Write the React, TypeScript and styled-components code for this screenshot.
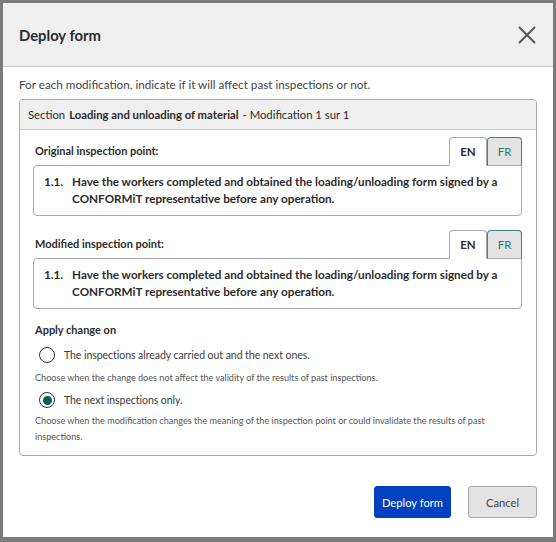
import React, { useState } from "react";
import styled, { createGlobalStyle } from "styled-components";

const GlobalStyle = createGlobalStyle`
    html, body {
        margin: 0;
        padding: 0;
        background: #7b7b7b;
        font-family: Lato, "Noto Sans", sans-serif;
    }
`;

const Overlay = styled.div`
    width: 556px;
    height: 542px;
    box-sizing: border-box;
    padding: 3px 3px 5px 3px;
    background: #7b7b7b;
`;

const Dialog = styled.div`
    width: 550px;
    height: 534px;
    background: #fff;
    display: flex;
    flex-direction: column;
    box-sizing: border-box;
`;

const Header = styled.div`
    height: 64px;
    background: #efefef;
    border-bottom: 1px solid #c8c8c8;
    display: flex;
    align-items: center;
    justify-content: space-between;
    padding: 0 14px 0 16px;
    box-sizing: border-box;
`;

const Title = styled.h1`
    margin: 0;
    font-size: 14.8px;
    font-weight: 700;
    color: #2b2b2b;
`;

const CloseButton = styled.button`
    background: none;
    border: none;
    padding: 0;
    width: 24px;
    height: 24px;
    cursor: pointer;
    display: flex;
    align-items: center;
    justify-content: center;
`;

const Body = styled.div`
    flex: 1;
    padding: 8px 16px 0 16px;
    display: flex;
    flex-direction: column;
`;

const Intro = styled.p`
    margin: 0 0 6px 0;
    font-size: 11.7px;
    color: #444;
    line-height: 18px;
`;

const Section = styled.div`
    border: 1px solid #a9a9a9;
    border-radius: 4px;
    overflow: hidden;
`;

const SectionHeader = styled.div`
    background: #efefef;
    border-bottom: 1px solid #c8c8c8;
    height: 29px;
    display: flex;
    align-items: center;
    padding: 0 8px;
    font-size: 11.3px;
    color: #2b2b2b;

    b {
        font-weight: 700;
        margin: 0 4px;
    }
`;

const SectionBody = styled.div`
    padding: 7px 14px 10px 13px;
    display: flex;
    flex-direction: column;
`;

const PointBlock = styled.div<{ $gap?: number }>`
    display: flex;
    flex-direction: column;
    margin-bottom: ${(p) => p.$gap ?? 0}px;
`;

const PointTop = styled.div`
    display: flex;
    align-items: flex-end;
    justify-content: space-between;
    padding-left: 2px;
`;

const PointLabel = styled.div`
    font-size: 11px;
    font-weight: 700;
    color: #2b2b2b;
    line-height: 16px;
    padding-bottom: 6px;
`;

const Tabs = styled.div`
    display: flex;
    margin-bottom: -1px;
    position: relative;
    z-index: 1;
`;

const Tab = styled.div<{ $active?: boolean }>`
    width: ${(p) => (p.$active ? 38 : 35)}px;
    height: 29px;
    box-sizing: border-box;
    display: flex;
    align-items: center;
    justify-content: center;
    font-size: 11.5px;
    font-weight: ${(p) => (p.$active ? 700 : 400)};
    color: ${(p) => (p.$active ? "#2b2b2b" : "#1f7a7a")};
    background: ${(p) => (p.$active ? "#fff" : "#e3e3e3")};
    border: 1px solid ${(p) => (p.$active ? "#a9a9a9" : "#3b8484")};
    border-bottom: ${(p) => (p.$active ? "1px solid #fff" : "1px solid #a9a9a9")};
    border-radius: 4px 4px 0 0;
`;

const PointBox = styled.div`
    border: 1px solid #a9a9a9;
    border-radius: 4px 0 4px 4px;
    padding: 7px 12px 8px 10px;
    display: flex;
    gap: 9px;
    font-size: 11.7px;
    font-weight: 700;
    line-height: 17px;
    color: #2b2b2b;
`;

const PointNumber = styled.span`
    flex: none;
`;

const ApplyTitle = styled.div`
    font-size: 11px;
    font-weight: 700;
    color: #2b2b2b;
    line-height: 16px;
    margin: 13px 0 6px 2px;
`;

const RadioRow = styled.label`
    display: flex;
    align-items: center;
    gap: 9px;
    padding-left: 6px;
    height: 22px;
    font-size: 10.5px;
    letter-spacing: -0.05px;
    color: #3a3a3a;
    cursor: pointer;
`;

const RadioCircle = styled.span<{ $checked?: boolean }>`
    width: 16px;
    height: 16px;
    border-radius: 50%;
    border: 1.5px solid #333;
    box-sizing: border-box;
    display: flex;
    align-items: center;
    justify-content: center;
    background: #fff;

    &::after {
        content: "";
        width: 9px;
        height: 9px;
        border-radius: 50%;
        background: ${(p) => (p.$checked ? "#006356" : "transparent")};
    }
`;

const Hint = styled.div`
    font-size: 9.1px;
    color: #555;
    line-height: 16px;
    margin: 4px 0 3px 2px;

    &:last-child {
        margin: 2px 0 0 2px;
    }
`;

const Footer = styled.div`
    margin-top: auto;
    display: flex;
    justify-content: flex-end;
    gap: 17px;
    padding: 0 16px 19px 0;
`;

const Button = styled.button<{ $primary?: boolean }>`
    height: 32px;
    width: ${(p) => (p.$primary ? 77 : 69)}px;
    padding: 0;
    font-family: inherit;
    font-size: 11.2px;
    border-radius: 3px;
    cursor: pointer;
    color: ${(p) => (p.$primary ? "#fff" : "#444")};
    background: ${(p) => (p.$primary ? "#0041c2" : "#e3e3e3")};
    border: 1px solid ${(p) => (p.$primary ? "#0041c2" : "#a9a9a9")};
`;

const pointText =
    "Have the workers completed and obtained the loading/unloading form signed by a CONFORMiT representative before any operation.";

function InspectionPoint({ label, gap }: { label: string; gap?: number }) {
    return (
        <PointBlock $gap={gap}>
            <PointTop>
                <PointLabel>{label}</PointLabel>
                <Tabs>
                    <Tab $active>EN</Tab>
                    <Tab>FR</Tab>
                </Tabs>
            </PointTop>
            <PointBox>
                <PointNumber>1.1.</PointNumber>
                <span>{pointText}</span>
            </PointBox>
        </PointBlock>
    );
}

export default function App() {
    const [choice, setChoice] = useState("next");

    return (
        <Overlay>
            <GlobalStyle />
            <Dialog>
                <Header>
                    <Title>Deploy form</Title>
                    <CloseButton aria-label="Close">
                        <svg width="20" height="20" viewBox="0 0 20 20">
                            <path d="M2 2 L18 18 M18 2 L2 18" stroke="#555" strokeWidth="2" />
                        </svg>
                    </CloseButton>
                </Header>
                <Body>
                    <Intro>For each modification, indicate if it will affect past inspections or not.</Intro>
                    <Section>
                        <SectionHeader>
                            Section<b>Loading and unloading of material</b>- Modification 1 sur 1
                        </SectionHeader>
                        <SectionBody>
                            <InspectionPoint label="Original inspection point:" gap={14} />
                            <InspectionPoint label="Modified inspection point:" />
                            <ApplyTitle>Apply change on</ApplyTitle>
                            <RadioRow onClick={() => setChoice("all")}>
                                <RadioCircle $checked={choice === "all"} />
                                The inspections already carried out and the next ones.
                            </RadioRow>
                            <Hint>Choose when the change does not affect the validity of the results of past inspections.</Hint>
                            <RadioRow onClick={() => setChoice("next")}>
                                <RadioCircle $checked={choice === "next"} />
                                The next inspections only.
                            </RadioRow>
                            <Hint>
                                Choose when the modification changes the meaning of the inspection point or could invalidate the
                                results of past inspections.
                            </Hint>
                        </SectionBody>
                    </Section>
                </Body>
                <Footer>
                    <Button $primary>Deploy form</Button>
                    <Button>Cancel</Button>
                </Footer>
            </Dialog>
        </Overlay>
    );
}
